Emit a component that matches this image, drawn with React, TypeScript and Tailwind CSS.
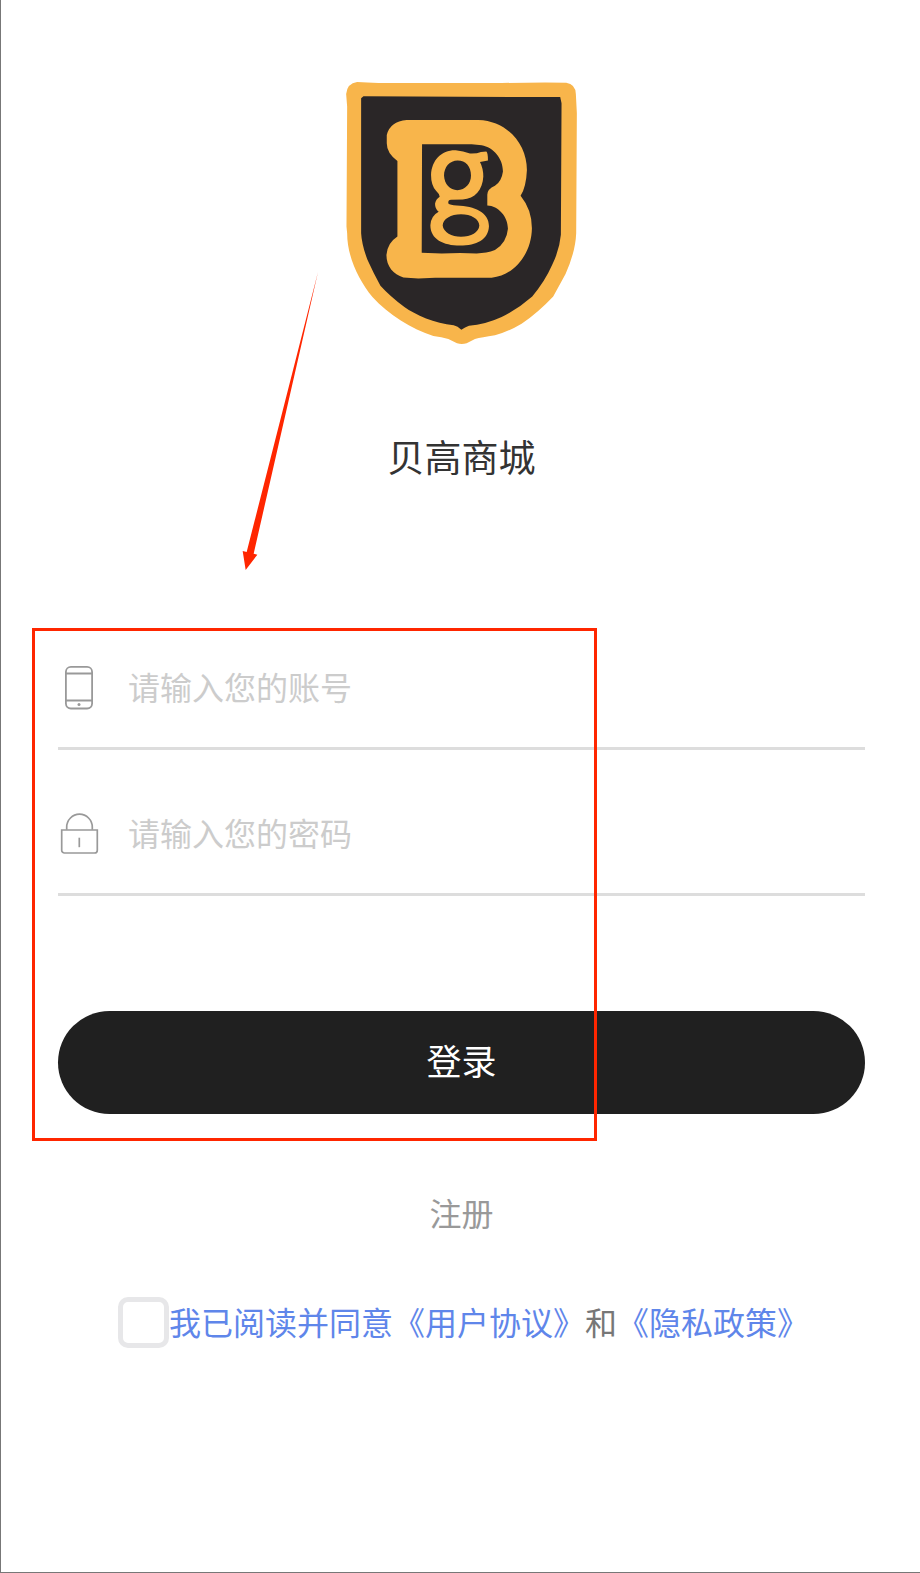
import type { InputHTMLAttributes, ReactNode } from 'react';

function ShieldLogo() {
  return (
    <svg viewBox="33 36 693 787" className="h-[262px] w-[231px]" role="img" aria-label="贝高商城">
      <path
        fill="#f8b54b"
        d="M66 36 Q95 38 130 39 L500 39 Q600 37 694 38 Q722 42 723 72 L726 130 L724 490 Q722 545 692 613 Q672 650 655 680 Q610 728 560 762 Q520 786 480 797 Q440 803 420 808 L395 821 Q380 825 366 821 L340 808 Q320 802 295 799 C230 778 160 735 112 682 C70 630 36 560 36 490 L34 470 L36 110 L33 72 Q36 40 66 36 Z"
      />
      <path
        fill="#2a2627"
        d="M85 79 L600 81 L676 81 L680 100 L678 495 Q674 540 652 585 Q630 635 592 680 Q550 717 500 742 Q450 765 402 768 Q390 772 379 780 Q368 770 356 767 C300 762 240 735 208 712 Q165 680 136 648 Q115 610 97 570 Q80 525 78 490 L78 85 Z"
      />
      <path
        fill="#f8b54b"
        d="M215 150 L430 150 C520 153 576 225 576 300 Q574 350 557 378 Q591 420 591 475 C590 550 540 617 470 624 L300 624 L250 626 L205 623 C175 615 154 590 154 556 Q156 520 187 500 L187 273 Q155 250 155 220 L155 195 Q165 154 215 150 Z"
      />
      <path
        fill="#2a2627"
        d="M261 223 L410 223 L440 226 C475 232 504 265 504 305 Q500 335 480 348 Q457 358 457 375 L457 407 C490 408 519 440 519 477 Q515 520 480 541 Q455 551 425 551 L375 550 L320 551 L260 549 Z"
      />
      <path
        fill="#f8b54b"
        fillRule="evenodd"
        d="M362 241 Q385 243 405 251 Q425 252 438 246 L454 245 Q459 248 459 272 L435 276 Q445 295 445 320 C443 360 420 387 383 389 L348 390 Q338 391 340 401 Q345 406 365 407 C420 409 462 428 462 469 C460 510 425 527 375 527 C325 527 286 508 286 466 Q288 438 311 426 Q300 418 300 402 Q302 389 314 381 Q313 372 303 363 Q288 345 288 315 C290 270 320 240 362 241 Z M368 272 C344 272 327 292 327 317 C328 343 345 361 367 361 C391 360 408 342 408 317 C408 290 392 272 368 272 Z M378 433 C348 433 323 447 323 467 C325 487 350 501 378 501 C408 501 432 487 433 467 C433 447 408 433 378 433 Z"
      />
    </svg>
  );
}

function PhoneIcon() {
  return (
    <svg viewBox="0 0 44 44" className="size-11 shrink-0" fill="none" stroke="#999999" strokeWidth="1.8" aria-hidden="true">
      <rect x="7.9" y="0.9" width="26.2" height="41.600" rx="5" />
      <path d="M8 7.500h26M8 34.500h26" />
      <circle cx="21" cy="38.500" r="1.500" fill="#999999" stroke="none" />
    </svg>
  );
}

function LockIcon() {
  return (
    <svg viewBox="0 0 44 44" className="size-11 shrink-0" fill="none" stroke="#999999" strokeWidth="1.7" aria-hidden="true">
      <path d="M8.700 17.700V15.200a12.800 13 0 0 1 25.600 0V17.700" />
      <path d="M3.700 18h35.600v20.200a2.800 2.800 0 0 1-2.800 2.800H6.500a2.800 2.800 0 0 1-2.800-2.800z" />
      <path d="M21.300 25.700v9.500" />
    </svg>
  );
}

type FieldProps = InputHTMLAttributes<HTMLInputElement> & { icon: ReactNode };

function Field({ icon, ...input }: FieldProps) {
  return (
    <label className="flex h-[121px] items-center gap-[26px] border-b-[3px] border-[#dddddd]">
      {icon}
      <input
        {...input}
        aria-label={input.placeholder}
        className="h-16 min-w-0 flex-1 bg-transparent pb-1 text-[32px] text-[#333333] outline-none placeholder:text-[#cccccc]"
      />
    </label>
  );
}

function Arrow() {
  return (
    <svg viewBox="0 0 360 990" className="pointer-events-none absolute left-[219px] top-[260px] h-[330px] w-[120px]" aria-hidden="true">
      <path fill="#ff2600" d="M294 36 L101 881 L112 884 L77 930 L68 873 L80 876 Z" />
    </svg>
  );
}

export default function App() {
  return (
    <main className="relative min-h-screen border-b border-l border-[#777777] bg-white pb-16 pl-[57px] pr-[55px] pt-[82px] font-['Noto_Sans_CJK_SC',sans-serif] font-normal">
      <header className="flex flex-col items-center">
        <ShieldLogo />
        <h1 className="mt-[84px] text-[37px] leading-[56px] text-[#333333]">贝高商城</h1>
      </header>

      <form className="mt-[145px]" onSubmit={(event) => event.preventDefault()}>
        <div className="relative">
          <div className="flex flex-col gap-[25px]">
            <Field icon={<PhoneIcon />} type="text" name="account" placeholder="请输入您的账号" />
            <Field icon={<LockIcon />} type="password" name="password" placeholder="请输入您的密码" />
          </div>
          <button type="submit" className="mt-[115px] block h-[103px] w-full rounded-full bg-[#202020] pb-1 text-[35px] text-white">
            登录
          </button>
          <div className="pointer-events-none absolute -bottom-[27px] -left-[26px] -top-px w-[565px] border-[3px] border-[#ff2600]" />
        </div>

        <div className="mt-[74px] text-center">
          <a href="#register" className="inline-block text-[32px] leading-[48px] text-[#999999]">注册</a>
        </div>

        <div className="mt-[61px] flex items-center justify-center pl-1 text-[32px] leading-[44px] text-[#5f86ea]">
          <input
            id="agree"
            type="checkbox"
            className="size-[51px] shrink-0 appearance-none rounded-[10px] border-[5px] border-[#e7e7e9] bg-white checked:bg-[#5f86ea]"
          />
          <p className="pb-1">
            <label htmlFor="agree">我已阅读并同意</label>
            <a href="#terms">《用户协议》</a>
            <span className="text-[#777777]">和</span>
            <a href="#privacy">《隐私政策》</a>
          </p>
        </div>
      </form>
      <Arrow />
    </main>
  );
}
